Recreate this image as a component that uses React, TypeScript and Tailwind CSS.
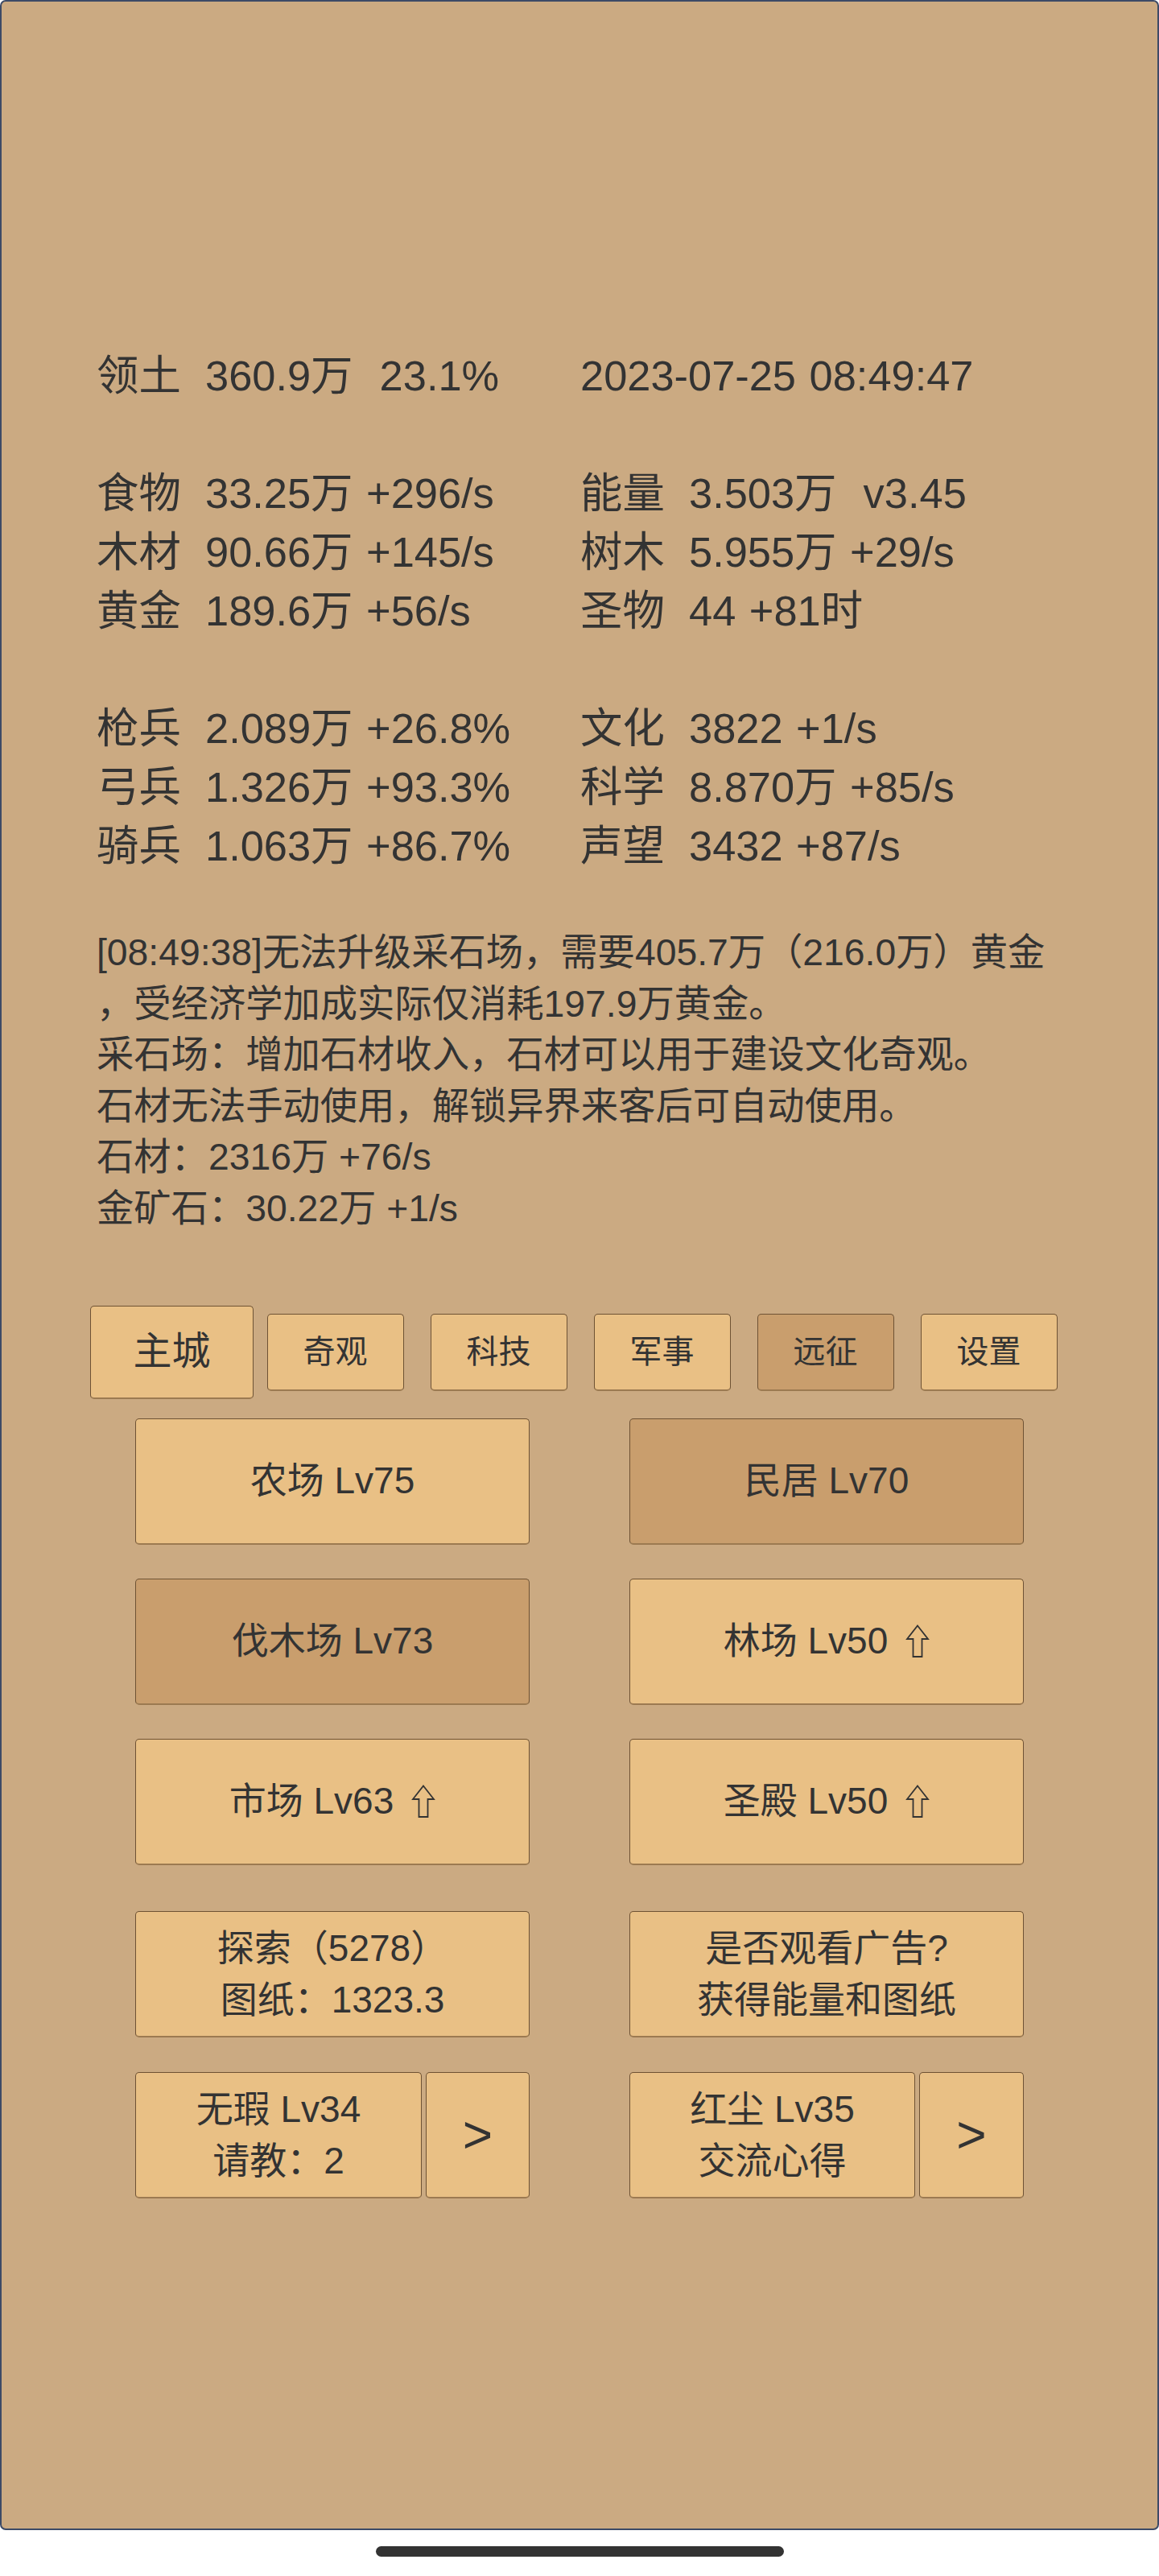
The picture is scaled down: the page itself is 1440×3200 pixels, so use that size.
import React from 'react';

type Cell = { label?: string; value: string };
type StatRow = [Cell, Cell] | null;

const statRows: StatRow[] = [
  [{ label: '领土', value: '360.9万  23.1%' }, { value: '2023-07-25 08:49:47' }],
  null,
  [{ label: '食物', value: '33.25万 +296/s' }, { label: '能量', value: '3.503万  v3.45' }],
  [{ label: '木材', value: '90.66万 +145/s' }, { label: '树木', value: '5.955万 +29/s' }],
  [{ label: '黄金', value: '189.6万 +56/s' }, { label: '圣物', value: '44 +81时' }],
  null,
  [{ label: '枪兵', value: '2.089万 +26.8%' }, { label: '文化', value: '3822 +1/s' }],
  [{ label: '弓兵', value: '1.326万 +93.3%' }, { label: '科学', value: '8.870万 +85/s' }],
  [{ label: '骑兵', value: '1.063万 +86.7%' }, { label: '声望', value: '3432 +87/s' }],
];

const logLines = [
  '[08:49:38]无法升级采石场，需要405.7万（216.0万）黄金',
  '，受经济学加成实际仅消耗197.9万黄金。',
  '采石场：增加石材收入，石材可以用于建设文化奇观。',
  '石材无法手动使用，解锁异界来客后可自动使用。',
  '石材：2316万 +76/s',
  '金矿石：30.22万 +1/s',
];

const tabs = [
  { name: '主城', active: true },
  { name: '奇观' },
  { name: '科技' },
  { name: '军事' },
  { name: '远征', dim: true },
  { name: '设置' },
];

const buildings = [
  { name: '农场 Lv75' },
  { name: '民居 Lv70', dim: true },
  { name: '伐木场 Lv73', dim: true },
  { name: '林场 Lv50', up: true },
  { name: '市场 Lv63', up: true },
  { name: '圣殿 Lv50', up: true },
];

const btn = 'border border-[#6e5234] border-b-2 border-b-[#9c7a51] rounded-[5px] flex items-center justify-center text-[#333333]';

function UpArrow() {
  return (
    <svg width="30" height="42" viewBox="0 0 30 42" className="ml-[22px]">
      <polygon points="15,1.5 28,18 20.5,18 20.5,40 9.5,40 9.5,18 2,18" fill="none" stroke="#333333" strokeWidth="1.8" />
    </svg>
  );
}

function StatCell({ cell, width }: { cell: Cell; width: string }) {
  return (
    <div className={`flex ${width}`}>
      {cell.label && <span className="w-[135px] shrink-0">{cell.label}</span>}
      <span className="whitespace-pre">{cell.value}</span>
    </div>
  );
}

export default function App() {
  return (
    <div className="w-[1440px] bg-white font-['Liberation_Sans','Noto_Sans_CJK_SC',sans-serif] text-[#333333]">
      <div className="h-[3143px] rounded-[7px] border-2 border-[#3c4a66] bg-[#cbaa82] pt-[429px]">
        {/* Stats */}
        <div className="ml-[118px] text-[52.4px] leading-[73px] [word-spacing:2px]">
          {statRows.map((row, i) =>
            row ? (
              <div key={i} className="flex h-[73px]">
                <StatCell cell={row[0]} width="w-[601px]" />
                <StatCell cell={row[1]} width="w-[600px]" />
              </div>
            ) : (
              <div key={i} className="h-[73px]" />
            ),
          )}
        </div>

        {/* Log */}
        <div className="ml-[118px] mt-[64px] text-[46.3px] leading-[63.6px]">
          {logLines.map((l, i) => (
            <div key={i} className="whitespace-pre">{l}</div>
          ))}
        </div>

        {/* Tabs */}
        <div className="ml-[110px] mt-[88px] grid h-[116px] w-[1218px] grid-cols-6 items-center justify-items-center">
          {tabs.map(t =>
            t.active ? (
              <div key={t.name} className={`${btn} h-[116px] w-[203px] bg-[#e9c085] text-[48px]`}>{t.name}</div>
            ) : (
              <div key={t.name} className={`${btn} h-[96px] w-[170px] text-[40px] ${t.dim ? 'bg-[#c99e6d]' : 'bg-[#e9c085]'}`}>{t.name}</div>
            ),
          )}
        </div>

        {/* Buildings */}
        <div className="ml-[166px] mt-[24px] grid grid-cols-[490px_490px] gap-x-[124px] gap-y-[42px] text-[46px]">
          {buildings.map(b => (
            <div key={b.name} className={`${btn} h-[157px] ${b.dim ? 'bg-[#c99e6d]' : 'bg-[#e9c085]'}`}>
              <span>{b.name}</span>
              {b.up && <UpArrow />}
            </div>
          ))}
        </div>

        <div className="ml-[166px] mt-[57px] grid grid-cols-[490px_490px] gap-x-[124px] gap-y-[43px] text-[46px] leading-[64px]">
          <div className={`${btn} h-[157px] flex-col bg-[#e9c085]`}>
            <span>探索（5278）</span>
            <span>图纸：1323.3</span>
          </div>
          <div className={`${btn} h-[157px] flex-col bg-[#e9c085]`}>
            <span>是否观看广告?</span>
            <span>获得能量和图纸</span>
          </div>
          <div className="flex h-[157px] gap-[5px]">
            <div className={`${btn} w-[356px] flex-col bg-[#e9c085]`}>
              <span>无瑕 Lv34</span>
              <span>请教：2</span>
            </div>
            <div className={`${btn} flex-1 bg-[#e9c085] text-[64px]`}>&gt;</div>
          </div>
          <div className="flex h-[157px] gap-[5px]">
            <div className={`${btn} w-[355px] flex-col bg-[#e9c085]`}>
              <span>红尘 Lv35</span>
              <span>交流心得</span>
            </div>
            <div className={`${btn} flex-1 bg-[#e9c085] text-[64px]`}>&gt;</div>
          </div>
        </div>
      </div>

      {/* Home indicator */}
      <div className="flex h-[57px] justify-center pt-[20px]">
        <div className="h-[13px] w-[507px] rounded-full bg-[#333333]" />
      </div>
    </div>
  );
}
